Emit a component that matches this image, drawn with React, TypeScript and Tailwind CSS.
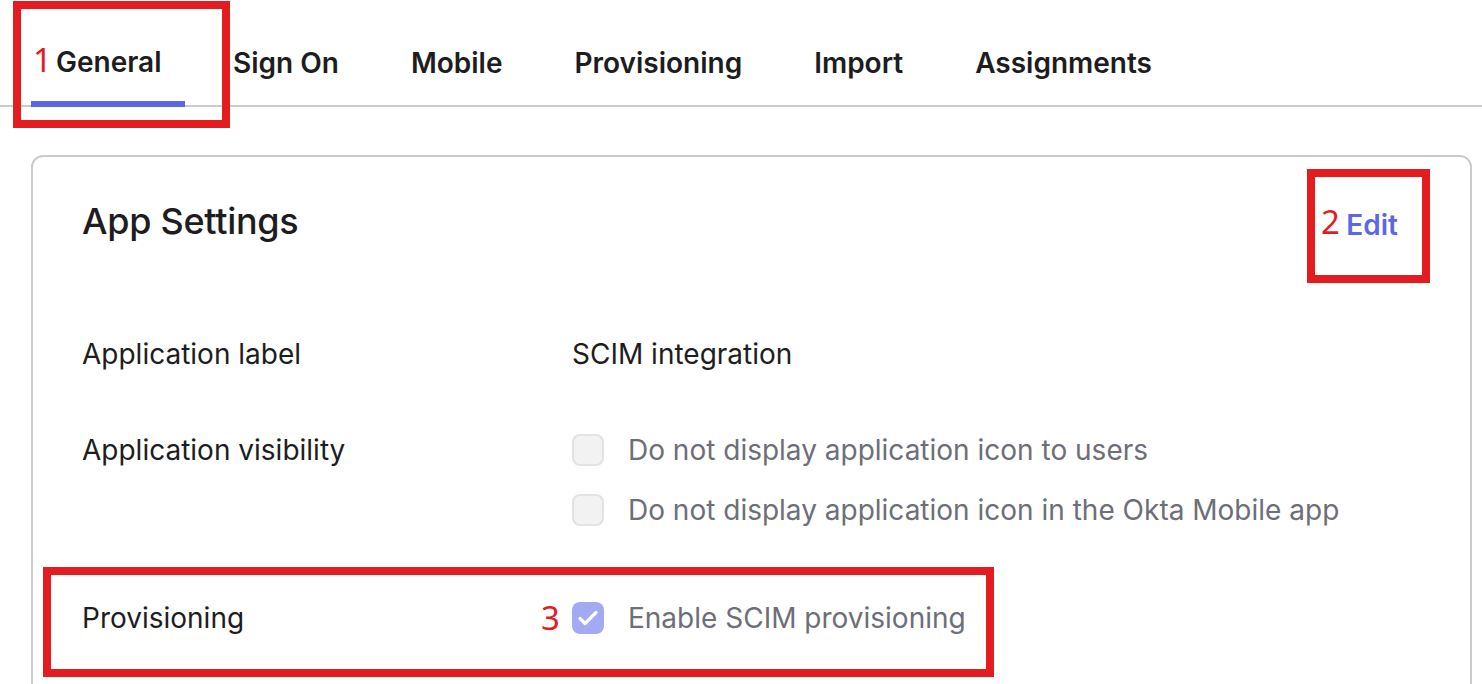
import React from "react";

const tabs = ["Sign On", "Mobile", "Provisioning", "Import", "Assignments"];

function Checkbox({ checked }: { checked?: boolean }) {
  if (checked) {
    return (
      <span className="flex h-[32px] w-[32px] shrink-0 items-center justify-center rounded-[8px] bg-[#a3aaf2]">
        <svg width="22" height="22" viewBox="0 0 22 22" fill="none">
          <path d="M3 11.5l5 5L19 5.5" stroke="#ffffff" strokeWidth="3.2" strokeLinecap="round" strokeLinejoin="round" />
        </svg>
      </span>
    );
  }
  return <span className="block h-[32px] w-[32px] shrink-0 rounded-[8px] border-2 border-[#e3e3e6] bg-[#f2f2f3]" />;
}

export default function App() {
  return (
    <div className="relative h-[684px] w-[1482px] overflow-hidden bg-white font-['Inter',sans-serif] text-[#1d1d21]">
      {/* Tabs */}
      <div className="flex h-[107px] items-end border-b-2 border-[#cbcbcd] pl-[31px]">
        <div className="relative -mb-[2px] flex h-[107px] w-[154px] items-center border-b-[6px] border-[#5b68e3] pl-[25px] pt-[22px] text-[28px] font-semibold">
          General
        </div>
        <div className="ml-[48px] flex h-[107px] items-center gap-[72px] pt-[22px] text-[28px] font-semibold">
          {tabs.map((t) => (
            <span key={t}>{t}</span>
          ))}
        </div>
      </div>

      {/* Card */}
      <div className="ml-[31px] mr-[10px] mt-[48px] h-[600px] rounded-[12px] border-2 border-[#cbcbcd] pl-[49px] pr-[72px] pt-[44px]">
        <div className="flex h-[40px] items-center justify-between">
          <h2 className="text-[36px] font-medium tracking-[-0.3px]">App Settings</h2>
          <a className="mt-[8px] text-[28px] font-semibold text-[#5b68e3]">Edit</a>
        </div>

        <div className="mt-[95px] flex h-[36px] items-center text-[28px]">
          <span className="w-[490px]">Application label</span>
          <span>SCIM integration</span>
        </div>

        <div className="mt-[60px] flex text-[28px]">
          <span className="flex h-[36px] w-[490px] items-center">Application visibility</span>
          <div className="flex flex-col gap-[24px]">
            <div className="flex h-[36px] items-center gap-[24px]">
              <Checkbox />
              <span className="text-[#6e6e78]">Do not display application icon to users</span>
            </div>
            <div className="flex h-[36px] items-center gap-[24px]">
              <Checkbox />
              <span className="text-[#6e6e78]">Do not display application icon in the Okta Mobile app</span>
            </div>
          </div>
        </div>

        <div className="mt-[72px] flex h-[36px] items-center text-[28px]">
          <span className="w-[490px]">Provisioning</span>
          <div className="flex items-center gap-[24px]">
            <Checkbox checked />
            <span className="text-[#6e6e78]">Enable SCIM provisioning</span>
          </div>
        </div>
      </div>

      {/* Annotations */}
      <div className="pointer-events-none absolute left-[13px] top-[1px] h-[127px] w-[217px] border-[8px] border-[#e41b1f]" />
      <span className="absolute left-[33px] top-[40px] font-['Noto_Sans',sans-serif] text-[33px] leading-[40px] text-[#e41b1f]">1</span>

      <div className="pointer-events-none absolute left-[1307px] top-[169px] h-[114px] w-[123px] border-[8px] border-[#e41b1f]" />
      <span className="absolute left-[1321px] top-[202px] font-['Noto_Sans',sans-serif] text-[33px] leading-[40px] text-[#e41b1f]">2</span>

      <div className="pointer-events-none absolute left-[43px] top-[567px] h-[110px] w-[951px] border-[8px] border-[#e41b1f]" />
      <span className="absolute left-[541px] top-[598px] font-['Noto_Sans',sans-serif] text-[33px] leading-[40px] text-[#e41b1f]">3</span>
    </div>
  );
}
